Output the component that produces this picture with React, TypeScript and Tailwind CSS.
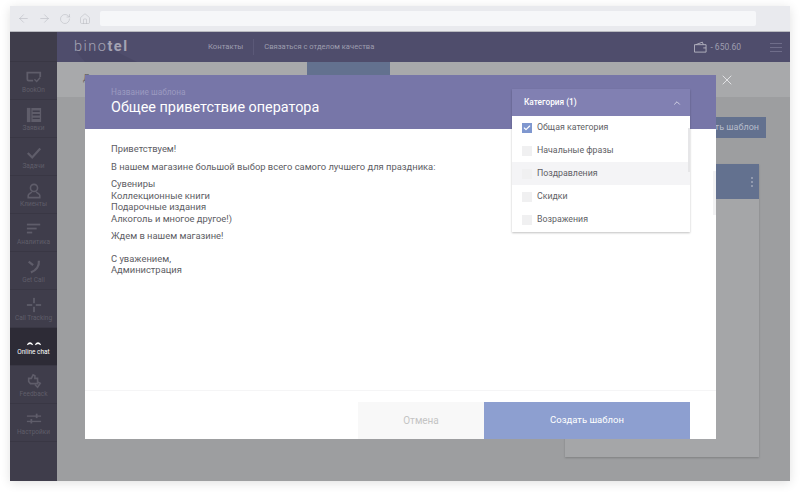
import { ArrowLeft, ArrowRight, RotateCw, Home, X, ChevronUp, Check } from "lucide-react";
import type { ReactNode } from "react";

const iconClass = "h-[16px] w-[16px]";

const navItems: { label: string; active?: boolean; icon: ReactNode }[] = [
  {
    label: "BookOn",
    icon: (
      <svg viewBox="0 0 18 16" className={iconClass} fill="none" stroke="currentColor" strokeWidth="2">
        <path d="M8 12H3a1.500 1.500 0 0 1-1.500-1.500V3h14.500v5" />
        <path d="M9.500 10.500l2.500 2.500 4-4.500" strokeWidth="1.500" />
      </svg>
    ),
  },
  {
    label: "Заявки",
    icon: (
      <svg viewBox="0 0 18 18" className={iconClass} fill="currentColor">
        <rect x="1" y="1" width="4" height="16" />
        <path d="M6 1h11v16H6zM7.500 4v1.500h8V4zM7.500 8v1.500h8V8zM7.500 12v1.500h8V12z" fillRule="evenodd" />
      </svg>
    ),
  },
  {
    label: "Задачи",
    icon: (
      <svg viewBox="0 0 18 18" className={iconClass} fill="none" stroke="currentColor" strokeWidth="2.500">
        <path d="M2 9l5 5 9-10" />
      </svg>
    ),
  },
  {
    label: "Клиенты",
    icon: (
      <svg viewBox="0 0 18 18" className={iconClass} fill="none" stroke="currentColor" strokeWidth="1.800">
        <circle cx="9" cy="5.500" r="4" />
        <path d="M6.500 9.500c0 2-4 2-4 4.500V16.500h13V14c0-2.500-4-2.500-4-4.500" />
      </svg>
    ),
  },
  {
    label: "Аналитика",
    icon: (
      <svg viewBox="0 0 18 18" className={iconClass} fill="currentColor">
        <rect x="1" y="3" width="15" height="2" />
        <rect x="1" y="7.500" width="11" height="2" />
        <rect x="1" y="12" width="6" height="2" />
      </svg>
    ),
  },
  {
    label: "Get Call",
    icon: (
      <svg viewBox="0 0 18 18" className={iconClass} fill="none" stroke="currentColor" strokeWidth="2.500">
        <path d="M14.500 2c.5 6-3 11-9 13" />
        <path d="M3 3l5 4" />
      </svg>
    ),
  },
  {
    label: "Call Tracking",
    icon: (
      <svg viewBox="0 0 18 18" className={iconClass} fill="currentColor">
        <rect x="8" y="1" width="2" height="6" />
        <rect x="8" y="11" width="2" height="6" />
        <rect x="1" y="8" width="6" height="2" />
        <rect x="11" y="8" width="6" height="2" />
      </svg>
    ),
  },
  {
    label: "Online chat",
    active: true,
    icon: (
      <svg viewBox="0 0 18 8" className="h-[8px] w-[16px]" fill="currentColor">
        <path d="M1 6.500C2 2 7 2 8 6.500L4.500 5zM10 6.500C11 2 16 2 17 6.500L13.500 5z" />
      </svg>
    ),
  },
  {
    label: "Feedback",
    icon: (
      <svg viewBox="0 0 18 18" className={iconClass} fill="none" stroke="currentColor" strokeWidth="1.800">
        <path d="M3 6h3l2-4 2 1v3h3v6H5L3 9.500z" />
        <path d="M13 10l3 1.500-3 4.500-3-3" />
      </svg>
    ),
  },
  {
    label: "Настройки",
    icon: (
      <svg viewBox="0 0 18 18" className={iconClass} fill="currentColor">
        <rect x="1" y="5" width="16" height="1.500" />
        <rect x="11" y="3" width="2" height="5" />
        <rect x="1" y="11" width="16" height="1.500" />
        <rect x="5" y="9" width="2" height="5" />
      </svg>
    ),
  },
];

const categories = [
  { label: "Общая категория", checked: true },
  { label: "Начальные фразы" },
  { label: "Поздравления", hover: true },
  { label: "Скидки" },
  { label: "Возражения" },
];

const App = () => {
  return (
    <div className="h-[492px] w-[800px] overflow-hidden bg-white px-[10px] pt-[6px] pb-[11px] font-['Roboto',sans-serif]">
      <div className="relative flex h-full flex-col shadow-[0_2px_10px_rgba(0,0,0,0.12)]">
        {/* browser chrome */}
        <div className="flex h-[26px] shrink-0 items-center border-b border-[#b9bac0] bg-[#e9eaee] pl-[3px] pr-[34px]">
          <div className="flex w-[87px] items-center gap-[8px] pl-[4px] text-[#b4b6bd]">
            <ArrowLeft className="h-[13px] w-[13px]" strokeWidth={1} />
            <ArrowRight className="h-[13px] w-[13px]" strokeWidth={1} />
            <RotateCw className="h-[12px] w-[12px]" strokeWidth={1} />
            <Home className="h-[12px] w-[12px]" strokeWidth={1} />
          </div>
          <div className="h-[15px] flex-1 rounded-[2px] bg-[#f6f7f9]" />
        </div>

        <div className="flex min-h-0 flex-1">
          {/* sidebar */}
          <div className="flex w-[47px] shrink-0 flex-col bg-[#3f3d4b]">
            <div className="h-[30px] shrink-0 border-b border-[#393744]" />
            {navItems.map((item) => (
              <div
                key={item.label}
                className={`flex h-[38px] shrink-0 flex-col items-center justify-center border-b border-[#393744] pt-[2px] ${
                  item.active ? "bg-[#2d2b36] text-white" : "text-[#5f5d6a]"
                }`}
              >
                {item.icon}
                <span className="mt-[1px] whitespace-nowrap text-[6.500px] leading-[9px]">{item.label}</span>
              </div>
            ))}
          </div>

          <div className="flex min-w-0 flex-1 flex-col">
            {/* top bar */}
            <div className="flex h-[30px] shrink-0 items-center bg-[#4f4d6c] text-[#9e9daf]">
              <div className="relative flex h-full w-[151px] items-center overflow-hidden pl-[17px] text-[14.500px] tracking-[1.500px] text-[#a4a3b3]">
                <svg viewBox="0 0 80 30" className="absolute left-0 top-0 h-[30px] w-[80px]">
                  <path d="M18 18h38l24 12H28z" fill="#4a4866" />
                </svg>
                <span className="relative font-light">
                  bino<b className="font-bold">tel</b>
                </span>
              </div>
              <span className="border-r border-[#5b5978] pr-[10px] text-[7.700px] leading-[16px]">Контакты</span>
              <span className="pl-[10px] text-[7.600px]">Связаться с отделом качества</span>
              <div className="ml-auto flex items-center pr-[8px]">
                <svg viewBox="0 0 14 12" className="h-[12px] w-[13px]" fill="none" stroke="#b4b3c0" strokeWidth="1">
                  <path d="M.5 3.500h12.500v8H.5zM2 3.500L9 .8l1 2.700M10 7h3" />
                </svg>
                <span className="ml-[3px] text-[8.500px]">- 650.60</span>
                <div className="ml-[29px] flex w-[12px] flex-col gap-[3px]">
                  <i className="h-px bg-[#6f6d8a]" />
                  <i className="h-px bg-[#6f6d8a]" />
                  <i className="h-px bg-[#6f6d8a]" />
                </div>
              </div>
            </div>

            {/* page behind the modal */}
            <div className="relative min-h-0 flex-1 overflow-hidden bg-[#9d9ea0]">
              <div className="flex h-[35px] bg-[#a8a9ab] pl-[26px]">
                <span className="w-[224px] pt-[10px] text-[9px] text-[#66666a]">Д</span>
                <div className="h-[14px] w-[83px] bg-[#63718f]" />
              </div>
              <div className="ml-[508px] mt-[20px] flex h-[21px] w-[201px] items-center justify-end bg-[#63718f] pr-[7px] text-[9px] text-[#b7bdcb]">
                Создать шаблон
              </div>
              <div className="ml-[508px] mt-[26px] h-[293px] w-[194px] bg-[#a5a6a8] shadow-[0_1px_2px_rgba(0,0,0,0.2)]">
                <div className="flex h-[35px] items-center justify-end bg-[#63718f] pr-[6px]">
                  <div className="flex flex-col gap-[2px]">
                    <i className="h-[2px] w-[2px] rounded-full bg-[#a0a8ba]" />
                    <i className="h-[2px] w-[2px] rounded-full bg-[#a0a8ba]" />
                    <i className="h-[2px] w-[2px] rounded-full bg-[#a0a8ba]" />
                  </div>
                </div>
              </div>
            </div>
          </div>
        </div>

        {/* modal */}
        <div className="absolute left-[75px] top-[69px] flex h-[364px] w-[631px] flex-col bg-white">
          <div className="flex h-[54px] shrink-0 flex-col justify-center bg-[#7776a8] pl-[26px]">
            <span className="text-[8.300px] leading-[12px] text-[#9b9ac0]">Название шаблона</span>
            <span className="text-[14.400px] leading-[20px] text-white">Общее приветствие оператора</span>
          </div>
          <div className="flex-1 pl-[26px] pt-[14px] text-[9.400px] leading-[11.500px] text-[#5d5d64]">
            <p>Приветствуем!</p>
            <p className="mt-[6px]">В нашем магазине большой выбор всего самого лучшего для праздника:</p>
            <p className="mt-[6px]">
              Сувениры
              <br />
              Коллекционные книги
              <br />
              Подарочные издания
              <br />
              Алкоголь и многое другое!)
            </p>
            <p className="mt-[6px]">Ждем в нашем магазине!</p>
            <p className="mt-[11px]">
              С уважением,
              <br />
              Администрация
            </p>
          </div>
          <div className="flex h-[49px] shrink-0 justify-end border-t border-[#f5f5f6] pr-[26px] pt-[11px]">
            <div className="flex w-[126px] items-center justify-center bg-[#f8f8f8] text-[10px] text-[#c4c4c4]">Отмена</div>
            <div className="flex w-[206px] items-center justify-center bg-[#8d9fd0] text-[9.500px] text-white">Создать шаблон</div>
          </div>
          <div className="absolute right-0 top-[96px] h-[44px] w-[3px] bg-[#f2f2f3]" />
        </div>

        {/* close */}
        <X className="absolute left-[709px] top-[66px] h-[16px] w-[16px] text-[#f0f0f2]" strokeWidth={1.200} />

        {/* category dropdown */}
        <div className="absolute left-[502px] top-[83px] w-[178px] bg-white shadow-[0_1px_2px_rgba(0,0,0,0.25)]">
          <div className="flex h-[27px] items-center justify-between bg-[#8180b2] pl-[12px] pr-[8px] text-[8.300px] font-medium text-white">
            Категория (1)
            <ChevronUp className="h-[10px] w-[10px]" strokeWidth={1.500} />
          </div>
          <div className="relative pb-[1px]">
            {categories.map((cat) => (
              <div
                key={cat.label}
                className={`flex h-[23px] items-center pl-[10px] text-[8.800px] text-[#5f5f66] ${cat.hover ? "bg-[#f4f4f6]" : ""}`}
              >
                <span
                  className={`mr-[5px] flex h-[10px] w-[10px] items-center justify-center ${
                    cat.checked ? "bg-[#7f97cf]" : "bg-[#f0f0f1]"
                  }`}
                >
                  {cat.checked && <Check className="h-[8px] w-[8px] text-white" strokeWidth={3.500} />}
                </span>
                {cat.label}
              </div>
            ))}
            <div className="absolute right-0 top-[12px] h-[44px] w-[2px] bg-[#e6e6e8]" />
          </div>
        </div>
      </div>
    </div>
  );
};

export default App;
